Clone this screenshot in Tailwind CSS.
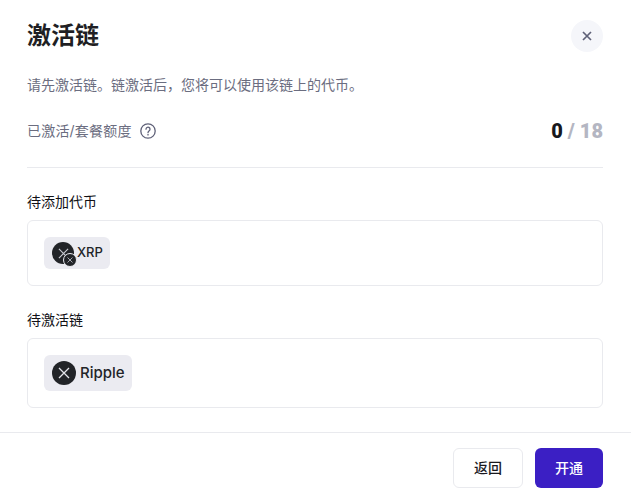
<!DOCTYPE html>
<html lang="zh-CN">
<head>
    <meta charset="UTF-8">
    <title>激活链</title>
    <script src="https://cdn.jsdelivr.net/npm/@tailwindcss/browser@4"></script>
</head>
<body class="bg-white font-['Inter','Noto_Sans_CJK_SC',sans-serif] w-[631px] h-[499px] overflow-hidden">
    <div class="flex flex-col h-[499px]">
        <div class="pl-[27px] pr-[28px] flex-1">
            <!-- Header -->
            <div class="flex items-center justify-between h-[35px] mt-[18px]">
                <h1 class="text-2xl font-semibold leading-[35px] text-[#1f1f24]">激活链</h1>
                <button class="w-8 h-8 rounded-full bg-[#f5f6fa] flex items-center justify-center">
                    <svg width="12" height="12" viewBox="0 0 12 12" fill="none" stroke="#5f6178" stroke-width="1.7"><path d="M2 2l8 8M10 2l-8 8"/></svg>
                </button>
            </div>

            <p class="mt-[22px] text-sm leading-5 text-[#6b6d80]">请先激活链。链激活后&#xFF0C;您将可以使用该链上的代币。</p>

            <!-- Quota -->
            <div class="mt-[26px] flex items-center justify-between h-5">
                <div class="flex items-center gap-2 text-sm text-[#6b6d80]">
                    <span class="tracking-[0.2px]">已激活/套餐额度</span>
                    <svg width="16" height="16" viewBox="0 0 16 16" fill="none" stroke="#5f6178" stroke-width="1.3"><circle cx="8" cy="8" r="7.2"/><path d="M6 6.2a2 2 0 1 1 3.2 1.6c-.8.6-1.2 1-1.2 1.9" stroke-linecap="round"/><circle cx="8" cy="11.8" r=".5" fill="#5f6178" stroke-width=".6"/></svg>
                </div>
                <div class="text-xl font-black font-['Roboto'] flex items-center gap-[5px]">
                    <span class="text-[#17171c]">0</span>
                    <span class="text-[#b4b6c2]">/</span>
                    <span class="text-[#b4b6c2]">18</span>
                </div>
            </div>

            <div class="mt-[26px] border-t border-[#e9eaee]"></div>

            <!-- Tokens -->
            <h2 class="mt-6 text-sm leading-5 font-normal text-[#111116]">待添加代币</h2>
            <div class="mt-2 h-[66px] border border-[#e9eaee] rounded-md p-4">
                <div class="inline-flex items-center h-8 pl-2 pr-[7px] gap-[3px] rounded-md bg-[#ebebf1]">
                    <span class="relative w-[22px] h-[22px] rounded-full bg-[#222428] flex items-center justify-center">
                        <svg width="11" height="11" viewBox="0 0 12 12" fill="none" stroke="#c9cad2" stroke-width="1.2"><path d="M1 1l10 10M11 1L1 11"/></svg>
                        <span class="absolute -right-[3px] -bottom-[3px] w-[14px] h-[14px] rounded-full bg-[#222428] border border-[#ebebf1] flex items-center justify-center">
                            <svg width="6" height="6" viewBox="0 0 12 12" fill="none" stroke="#c9cad2" stroke-width="1.6"><path d="M1 1l10 10M11 1L1 11"/></svg>
                        </span>
                    </span>
                    <span class="text-[13px] font-medium text-[#222428]">XRP</span>
                </div>
            </div>

            <!-- Chains -->
            <h2 class="mt-6 text-sm leading-5 font-normal text-[#111116]">待激活链</h2>
            <div class="mt-2 h-[70px] border border-[#e9eaee] rounded-md p-4">
                <div class="inline-flex items-center h-9 pl-2 pr-[7px] gap-1 rounded-md bg-[#ebebf1]">
                    <span class="w-6 h-6 rounded-full bg-[#222428] flex items-center justify-center">
                        <svg width="12" height="12" viewBox="0 0 12 12" fill="none" stroke="#e4e4ea" stroke-width="1.3"><path d="M1 1l10 10M11 1L1 11"/></svg>
                    </span>
                    <span class="text-[15px] font-medium text-[#222428]">Ripple</span>
                </div>
            </div>
        </div>

        <!-- Footer -->
        <div class="h-[67px] border-t border-[#e9eaee] pr-[28px] flex items-start justify-end gap-3 pt-[15px]">
            <button class="w-[70px] h-10 rounded-md border border-[#e9eaee] bg-white text-sm font-medium text-[#1a1a1f]">返回</button>
            <button class="w-[68px] h-10 rounded-md bg-[#3b1fc4] text-sm font-medium text-white">开通</button>
        </div>
    </div>
</body>
</html>
